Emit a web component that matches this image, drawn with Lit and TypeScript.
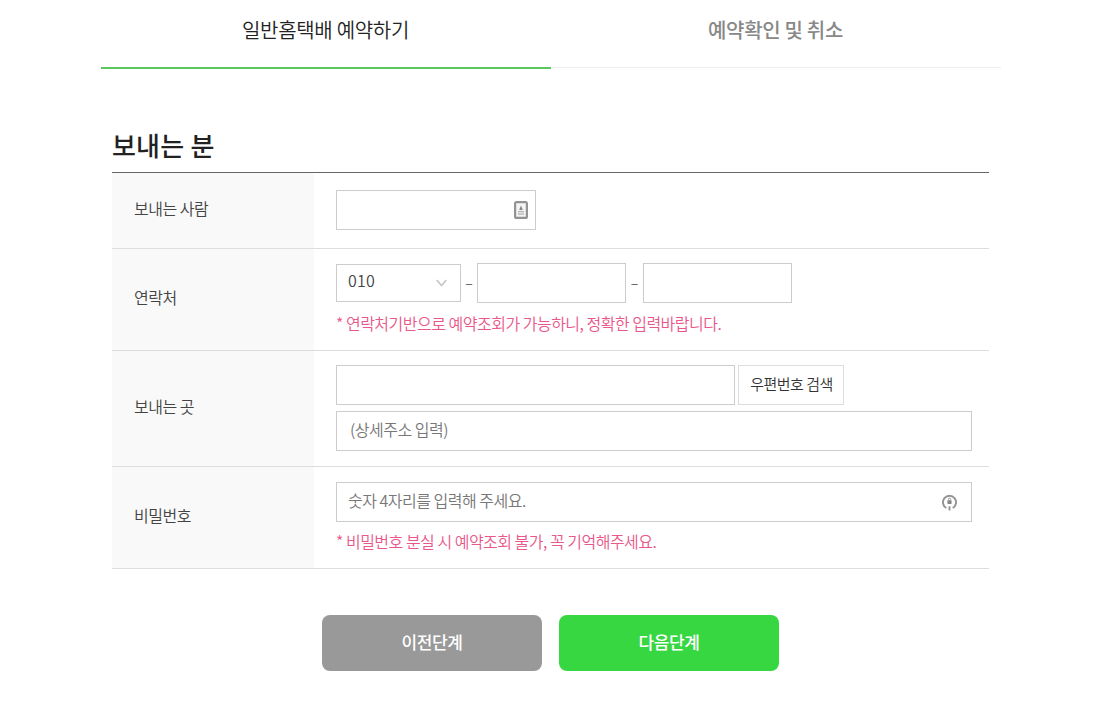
import { LitElement, html, css } from 'lit';
import { customElement } from 'lit/decorators.js';

@customElement('app-root')
export class AppRoot extends LitElement {
  static styles = css`
    :host {
      display: block;
      min-height: 717px;
      background: #fff;
      font-family: 'Noto Sans CJK KR', 'Noto Sans', sans-serif;
      font-weight: 350;
      color: #333;
    }

    .tabs {
      display: flex;
      width: 900px;
      margin-left: 101px;
      height: 68px;
      border-bottom: 1px solid #eee;
      box-sizing: border-box;
    }

    .tab {
      width: 450px;
      height: 69px;
      box-sizing: border-box;
      padding: 15px 1px 0 0;
      text-align: center;
      font-size: 20px;
      line-height: 30px;
      letter-spacing: -0.3px;
      color: #888;
      font-weight: 500;
    }

    .tab.on {
      color: #222;
      font-weight: 350;
      border-bottom: 2px solid #5ac75f;
    }

    .section {
      width: 877px;
      margin: 0 0 0 112px;
    }

    h2 {
      margin: 56px 0 0;
      height: 48px;
      font-size: 26px;
      line-height: 42px;
      font-weight: 500;
      color: #222;
      letter-spacing: 0.2px;
      border-bottom: 1px solid #666;
    }

    .row {
      display: flex;
      box-sizing: border-box;
      border-bottom: 1px solid #ddd;
    }

    .label {
      width: 202px;
      flex: none;
      box-sizing: border-box;
      padding: 0 0 6px 22px;
      display: flex;
      align-items: center;
      background: #f9f9f9;
      font-size: 16px;
      letter-spacing: -0.5px;
      color: #444;
    }

    .body {
      padding-left: 22px;
      display: flex;
      flex-direction: column;
      box-sizing: border-box;
    }

    .r1 { height: 76px; }
    .r1 .body { padding-top: 17px; }
    .r2 { height: 102px; }
    .r2 .body { padding-top: 14px; }
    .r3 { height: 116px; }
    .r3 .body { padding-top: 14px; gap: 6px; }
    .r4 { height: 102px; }
    .r4 .body { padding-top: 15px; }
    .r4 .note { margin-top: 8px; }

    .line {
      display: flex;
      align-items: center;
    }

    .field {
      box-sizing: border-box;
      height: 40px;
      border: 1px solid #ccc;
      background: #fff;
      display: flex;
      align-items: center;
      justify-content: space-between;
      padding: 0 14px 0 11px;
      font-size: 16px;
      color: #777;
      letter-spacing: -0.5px;
    }

    .field span { margin-bottom: 5px; }

    .w200 { width: 200px; padding-right: 7px; }
    .w149 { width: 149px; }
    .w399 { width: 399px; }
    .w636 { width: 636px; }
    .detail { padding-left: 13px; }

    .select {
      width: 125px;
      height: 38px;
      padding-right: 13px;
      color: #444;
      letter-spacing: 0.2px;
    }

    .select span { margin-bottom: 6px; }

    .dash {
      width: 16px;
      padding-bottom: 3px;
      text-align: center;
      font-size: 14px;
      color: #555;
    }

    .dash2 { width: 17px; }

    .search {
      box-sizing: border-box;
      width: 106px;
      height: 40px;
      margin-left: 3px;
      border: 1px solid #ddd;
      background: #fff;
      font: inherit;
      font-size: 15px;
      letter-spacing: -0.5px;
      color: #333;
      padding: 0 0 3px 1px;
    }

    .note {
      margin: 9px 0 0;
      font-size: 16px;
      line-height: 22px;
      letter-spacing: -0.5px;
      color: #e9588a;
    }

    .actions {
      display: flex;
      gap: 17px;
      margin: 46px 0 0 322px;
    }

    .btn {
      width: 220px;
      height: 56px;
      border: 0;
      border-radius: 8px;
      color: #fff;
      font: inherit;
      font-size: 17px;
      font-weight: 500;
      letter-spacing: -0.4px;
      padding: 0 0 4px;
    }

    .prev { background: #999; }
    .next { background: #37d742; }

    svg { display: block; flex: none; }
  `;

  render() {
    return html`
      <div class="tabs">
        <div class="tab on">일반홈택배 예약하기</div>
        <div class="tab">예약확인 및 취소</div>
      </div>
      <div class="section">
        <h2>보내는 분</h2>
        <div class="row r1">
          <div class="label">보내는 사람</div>
          <div class="body">
            <div class="field w200">
              <span></span>
              <svg width="14" height="18" viewBox="0 0 14 18" fill="none">
                <rect x="1.1" y="1.1" width="11.8" height="15.8" rx="1.5" fill="#f4f4f4" stroke="#939393" stroke-width="2.2" />
                <path d="M7 4.5 L8.8 9 H5.2 Z" fill="#868686" />
                <rect x="4" y="10" width="6" height="1.3" fill="#b4b4b4" />
                <rect x="4" y="12.4" width="6" height="1.3" fill="#b4b4b4" />
              </svg>
            </div>
          </div>
        </div>
        <div class="row r2">
          <div class="label">연락처</div>
          <div class="body">
            <div class="line">
              <div class="field select">
                <span>010</span>
                <svg width="11" height="8" viewBox="0 0 11 8" fill="none">
                  <path d="M0.7 1 L5.5 6.5 L10.3 1" stroke="#c4c4c4" stroke-width="1.5" />
                </svg>
              </div>
              <span class="dash">–</span>
              <div class="field w149"></div>
              <span class="dash dash2">–</span>
              <div class="field w149"></div>
            </div>
            <p class="note">* 연락처기반으로 예약조회가 가능하니, 정확한 입력바랍니다.</p>
          </div>
        </div>
        <div class="row r3">
          <div class="label">보내는 곳</div>
          <div class="body">
            <div class="line">
              <div class="field w399"></div>
              <button class="search">우편번호 검색</button>
            </div>
            <div class="field w636 detail"><span>(상세주소 입력)</span></div>
          </div>
        </div>
        <div class="row r4">
          <div class="label">비밀번호</div>
          <div class="body">
            <div class="field w636">
              <span>숫자 4자리를 입력해 주세요.</span>
              <svg width="15" height="19" viewBox="0 0 16 19" fill="none">
                <path d="M4.6 15.4 A7 7 0 1 1 11.4 15.4" stroke="#939393" stroke-width="2" />
                <path d="M8 13.5 V18" stroke="#939393" stroke-width="2" />
                <rect x="5.8" y="7.2" width="4.4" height="3.8" rx="0.6" fill="#868686" />
                <path d="M6.7 7.2 V6.2 A1.3 1.3 0 0 1 9.3 6.2 V7.2" stroke="#868686" stroke-width="0.9" />
              </svg>
            </div>
            <p class="note">* 비밀번호 분실 시 예약조회 불가, 꼭 기억해주세요.</p>
          </div>
        </div>
      </div>
      <div class="actions">
        <button class="btn prev">이전단계</button>
        <button class="btn next">다음단계</button>
      </div>
    `;
  }
}
